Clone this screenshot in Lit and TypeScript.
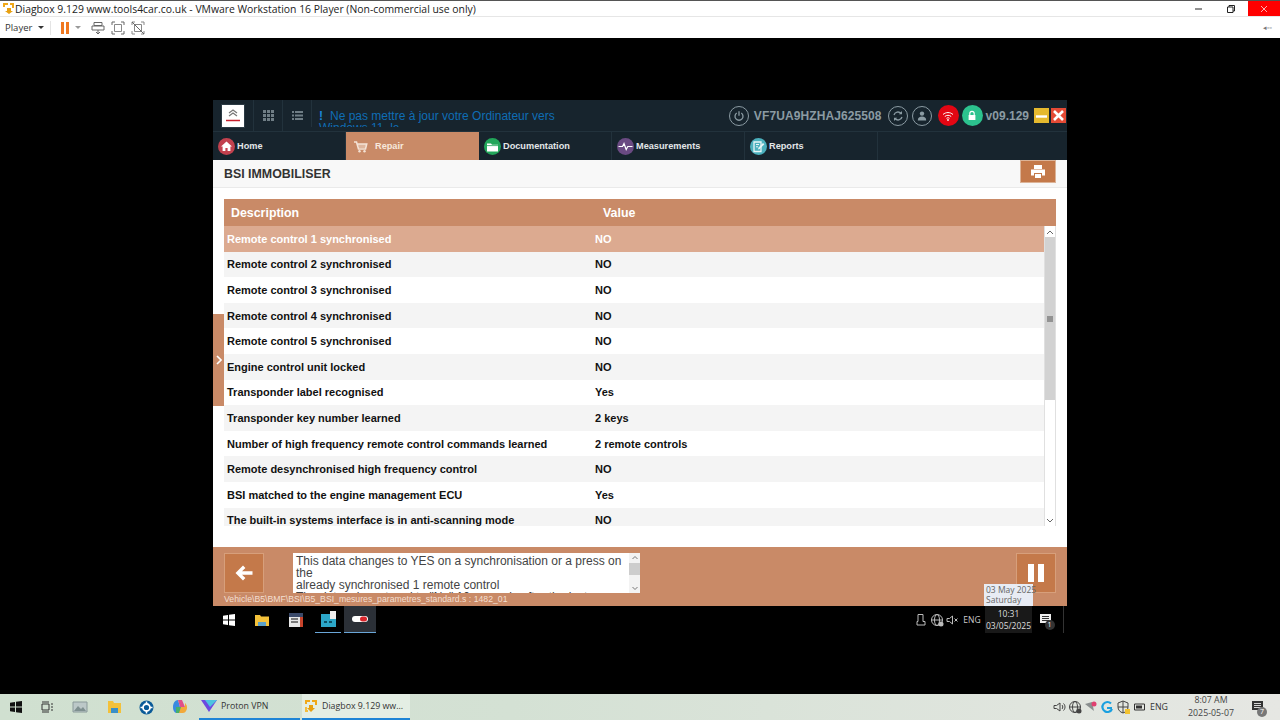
import { LitElement, html, css, svg } from 'lit';
import { customElement } from 'lit/decorators.js';

const ROWS: [string, string][] = [
  ['Remote control 1 synchronised', 'NO'],
  ['Remote control 2 synchronised', 'NO'],
  ['Remote control 3 synchronised', 'NO'],
  ['Remote control 4 synchronised', 'NO'],
  ['Remote control 5 synchronised', 'NO'],
  ['Engine control unit locked', 'NO'],
  ['Transponder label recognised', 'Yes'],
  ['Transponder key number learned', '2 keys'],
  ['Number of high frequency remote control commands learned', '2 remote controls'],
  ['Remote desynchronised high frequency control', 'NO'],
  ['BSI matched to the engine management ECU', 'Yes'],
  ['The built-in systems interface is in anti-scanning mode', 'NO'],
];

// small helper, every icon below is a plain stroked/filled svg
const ico = (w: number, h: number, body: unknown) =>
  html`<svg width=${w} height=${h} viewBox="0 0 ${w} ${h}">${body}</svg>`;

const diagboxLogo = ico(14, 14, svg`
  <path d="M1 1h5v2H3v2H1z M8 1h5v5h-2V3H8z" fill="#f0a818"/>
  <path d="M5 6h4v3h2l-4 4-4-4h2z" fill="#e8a010"/>
  <path d="M1 8h2v3h1v2H1z" fill="#f4bc3c"/>`);

const NAV = [
  { label: 'Home', color: '#c2414e', glyph: svg`<path d="M8.5 3.5 3 8.5h1.6v4.5h2.8v-3h2.2v3h2.8V8.5H14z" fill="#fff"/>` },
  { label: 'Repair', color: 'transparent', glyph: svg`<path d="M2 4h2.5l2 7h7l1.2-5H5.5" fill="none" stroke="#f4e3d6" stroke-width="1.6"/><circle cx="7.5" cy="13.2" r="1.2" fill="#f4e3d6"/><circle cx="12.5" cy="13.2" r="1.2" fill="#f4e3d6"/><path d="M6 7h8M6.5 9h7" stroke="#f4e3d6"/>` },
  { label: 'Documentation', color: '#22a65a', glyph: svg`<path d="M3 5.5h4l1 1.2h6v6.8H3z" fill="#fff"/><path d="M3 7.6h11" stroke="#22a65a" stroke-width=".8"/>` },
  { label: 'Measurements', color: '#6a4a82', glyph: svg`<path d="M1.5 8.5h4l1.5-3 2.2 6 1.6-3h4.7" fill="none" stroke="#fff" stroke-width="1.2"/>` },
  { label: 'Reports', color: '#4bb0bd', glyph: svg`<path d="M4 4h7v9.5H4z" fill="none" stroke="#e8f6f8" stroke-width="1.3"/><path d="M6 6.5h3M6 8.8h2" stroke="#e8f6f8"/><path d="M8 11.5l.4-1.8L13 5l1.3 1.3-4.6 4.8z" fill="#e8f6f8"/>` },
];

@customElement('app-root')
export class AppRoot extends LitElement {
  static styles = css`
    :host {
      display: flex;
      flex-direction: column;
      width: 1280px;
      height: 720px;
      overflow: hidden;
      background: #000;
      font-family: 'Liberation Sans', Arial, sans-serif;
    }
    svg { display: block; flex: none; }

    /* vmware player chrome */
    .vm-title {
      height: 15px;
      border-top: 1px solid #555;
      background: #fff;
      display: flex;
      align-items: center;
      padding-left: 2px;
      gap: 0;
      font: 10.4px 'Open Sans', sans-serif;
      color: #222;
      white-space: nowrap;
    }
    .vm-title .name { margin-left: 0; flex: 1; }
    .win-btn { width: 32px; height: 15px; display: flex; align-items: center; justify-content: center; }
    .win-btn.close { background: #f00; }
    .vm-tools {
      height: 21px;
      background: #fff;
      border-top: 1px solid #e6e6e6;
      display: flex;
      align-items: center;
      font: 9.5px 'Open Sans', sans-serif;
      color: #333;
      padding-left: 5px;
    }
    .vm-tools .caret { width: 0; height: 0; border: 3px solid transparent; border-top: 3px solid #333; border-bottom: 0; margin-left: 6px; }
    .vm-tools .caret.soft { border-top-color: #999; margin: 0 10px 0 6px; }
    .vm-tools .sep { width: 1px; height: 14px; background: #e4e4e4; margin: 0 10px 0 6px; }
    .vm-tools .gap { width: 6px; }
    .vm-tools .end { margin-left: auto; margin-right: 8px; font-size: 7px; color: #777; }

    /* black area around the guest */
    .stage { flex: 1; padding: 62px 0 0 213px; position: relative; }
    .guest { width: 854px; position: relative; }
    .app { height: 506px; display: flex; flex-direction: column; background: #fff; position: relative; }

    .head { height: 31px; background: #17242d; display: flex; align-items: center; color: #8b9ba3; }
    .logo { width: 24px; height: 24px; margin: 0 8px 0 8px; background: #fff; border: 1px solid #2b3a44; box-sizing: border-box; display: flex; align-items: center; justify-content: center; }
    .head-tool { width: 28px; height: 31px; border-left: 1px solid #22323c; display: flex; align-items: center; justify-content: center; }
    .notice {
      width: 286px;
      height: 27px;
      align-self: flex-end;
      margin-bottom: 4px;
      border-left: 1px solid #22323c;
      padding-left: 7px;
      overflow: hidden;
      font-size: 12px;
      line-height: 12px;
      color: #0f6db5;
      padding-top: 10px;
      box-sizing: border-box;
    }
    .notice b { margin-right: 7px; color: #1b86d8; }
    .status { margin-left: auto; display: flex; align-items: center; }
    .circle { width: 20px; height: 20px; border: 1.5px solid #8b9ba3; border-radius: 50%; box-sizing: border-box; display: flex; align-items: center; justify-content: center; }
    .vin { font-size: 12px; font-weight: bold; margin: 0 6px 0 5px; letter-spacing: .1px; }
    .fill { border: 0; width: 21px; height: 21px; }
    .ver { font-size: 12px; font-weight: bold; margin: 0 5px 0 3px; }
    .square { width: 15px; height: 15px; display: flex; align-items: center; justify-content: center; margin-right: 2px; }

    .nav { height: 29px; background: #17242d; border-top: 1px solid #22323c; box-sizing: border-box; display: flex; }
    .tab { width: 133px; display: flex; align-items: center; padding-left: 5px; box-sizing: border-box; gap: 2px; font-size: 9.2px; font-weight: bold; color: #e2e6e8; border-right: 1px solid #22323c; }
    .tab.active { background: #c98a67; color: #f7e8dc; padding-left: 6px; gap: 6px; border: 0; }
    .badge { width: 17px; height: 17px; border-radius: 50%; }

    .title { height: 28px; background: #f8f8f8; border-bottom: 1px solid #eaeaea; box-sizing: border-box; display: flex; align-items: center; justify-content: space-between; padding: 0 11px; font-size: 12.4px; font-weight: bold; color: #333; }
    .print { width: 36px; height: 23px; margin-top: -4px; background: #c4794a; border: 1px solid #dcb397; box-sizing: border-box; display: flex; align-items: center; justify-content: center; }

    .content { flex: 1; padding: 11px 11px 0; min-height: 0; }
    .thead { height: 27px; background: #c98a67; display: flex; align-items: center; font-size: 12.4px; font-weight: bold; color: #fff; }
    .thead span:first-child { width: 372px; padding-left: 7px; box-sizing: border-box; }
    .thead span:last-child { padding-left: 7px; }
    .tbody { height: 300px; display: flex; }
    .rows { flex: 1; overflow: hidden; }
    .row { height: 25.6px; display: flex; align-items: center; font-size: 11px; font-weight: bold; color: #111; background: #fff; }
    .row:nth-child(even) { background: #f4f4f4; }
    .row.sel { background: #dcaa90; color: #fff; }
    .row span:first-child { width: 371px; padding-left: 3px; box-sizing: border-box; }
    .scroll { width: 12px; display: flex; flex-direction: column; border: 1px solid #e0e0e0; border-width: 0 1px; box-sizing: border-box; background: #fff; }
    .arrow { height: 11px; flex: none; display: flex; align-items: center; justify-content: center; }
    .thumb { height: 163px; flex: none; background: #d2d2d2; display: flex; align-items: center; justify-content: center; }
    .track { flex: 1; }

    .drawer { position: absolute; left: 0; top: 214px; width: 11px; height: 92px; background: #c98a67; display: flex; align-items: center; justify-content: center; }

    .foot { height: 59px; background: #c98a67; padding: 6px 11px 0; box-sizing: border-box; position: relative; }
    .foot-main { display: flex; height: 40px; }
    .big-btn { width: 40px; height: 40px; background: #c4794a; border: 1px solid #d79f7b; box-sizing: border-box; display: flex; align-items: center; justify-content: center; }
    .help { width: 347px; margin-left: 29px; height: 40px; background: #fff; display: flex; overflow: hidden; }
    .help-text { flex: 1; padding: 2px 0 0 3px; font-size: 12px; line-height: 12px; color: #444; overflow: hidden; }
    .help-bar { width: 11px; background: #f3f3f3; display: flex; flex-direction: column; justify-content: space-between; align-items: center; }
    .help-thumb { width: 100%; height: 12px; background: #cdcdcd; }
    .foot .big-btn:last-child { margin-left: auto; }
    .path { font-size: 8.7px; color: #f3dfd1; margin-top: 1px; }

    /* guest windows taskbar */
    .gbar { width: 851px; height: 27px; display: flex; align-items: center; background: #000; color: #ccc; font: 8.5px 'Open Sans', sans-serif; }
    .gslot { height: 27px; display: flex; align-items: center; justify-content: center; box-sizing: border-box; }
    .gslot.run { border-bottom: 1px solid #6aa6d8; height: 27px; margin: 0 1px; }
    .gslot.now { background: #2b3037; border-bottom: 1px solid #6aa6d8; }
    .grow { flex: 1; }
    .clock { width: 47px; background: #191919; flex-direction: column; line-height: 12px; color: #ddd; }
    .tip { position: absolute; left: 771px; top: 484px; width: 49px; height: 22px; background: #e8ecf4; color: #666; font: 8.5px/10px 'Open Sans', sans-serif; padding: 1px 0 0 2px; box-sizing: border-box; white-space: nowrap; }

    /* host taskbar */
    .bar { height: 26px; background: linear-gradient(90deg, #d0e0d0, #d4e1d4 40%, #e6e7e3); display: flex; align-items: center; font: 8.8px 'Open Sans', sans-serif; color: #333; }
    .slot { height: 26px; display: flex; align-items: center; justify-content: center; flex: none; }
    .task { height: 26px; display: flex; align-items: center; box-sizing: border-box; border-bottom: 2px solid #1f84d6; white-space: nowrap; gap: 4px; padding-left: 2px; }
    .task.now { background: #e4eee4; }
    .host-clock { width: 64px; flex-direction: column; line-height: 13px; color: #444; }
    .note { position: relative; }
    .count { position: absolute; left: 50%; top: 50%; margin: 0 0 0 -1px; width: 10px; height: 10px; border-radius: 50%; background: #777; color: #fff; font-size: 7px; line-height: 10px; text-align: center; }
  `;

  private tray(stroke: string) {
    return {
      speaker: ico(14, 14, svg`<path d="M2 5.5h2.5L8 3v8L4.5 8.5H2z" fill="none" stroke=${stroke}/><path d="M10 5c1 1 1 3 0 4M11.5 3.5c2 2 2 5 0 7" fill="none" stroke=${stroke}/>`),
      globe: ico(14, 14, svg`<circle cx="7" cy="7" r="5.5" fill="none" stroke=${stroke}/><ellipse cx="7" cy="7" rx="2.5" ry="5.5" fill="none" stroke=${stroke}/><path d="M1.5 7h11" stroke=${stroke}/><circle cx="11" cy="11" r="2.5" fill=${stroke}/>`),
    };
  }

  private note(n: string) {
    return html`<div class="slot note" style="width:30px">
      ${ico(14, 14, svg`<path d="M1 1h11v9H1z" fill="#333"/><path d="M3 3.5h7M3 5.5h7M3 7.5h7" stroke="#fff" stroke-width=".8"/>`)}
      <span class="count">${n}</span>
    </div>`;
  }

  private renderVmChrome() {
    return html`
      <div class="vm-title">
        ${ico(13, 13, svg`<path d="M1 1h5v2H3v2H1z M8 1h4v5h-2V3H8z" fill="#f0a818"/><path d="M5 6h4v3h2l-4 3-4-3h2z" fill="#e8a010"/>`)}
        <span class="name">Diagbox 9.129 www.tools4car.co.uk - VMware Workstation 16 Player (Non-commercial use only)</span>
        <div class="win-btn">${ico(10, 10, svg`<path d="M1 5h7" stroke="#222"/>`)}</div>
        <div class="win-btn" style="margin:0 1px 0 0">${ico(10, 10, svg`<path d="M1.5 3h5.5v5.5H1.5z" fill="none" stroke="#222"/><path d="M3 3V1.5h5.5V7H7" fill="none" stroke="#222"/>`)}</div>
        <div class="win-btn close">${ico(10, 10, svg`<path d="M2 2l6 6M8 2l-6 6" stroke="#ffb0b0"/>`)}</div>
      </div>
      <div class="vm-tools">
        <span>Player</span><span class="caret"></span><span class="sep"></span>
        ${ico(8, 13, svg`<path d="M0 1h3v12H0zM5 1h3v12H5z" fill="#f07820"/>`)}
        <span class="caret soft"></span>
        ${ico(14, 14, svg`<path d="M3 1.5h8v3H3zM1 5h12v4H1z" fill="none" stroke="#666"/><path d="M7 9v3.5M5 11l2 2 2-2" fill="none" stroke="#666"/>`)}
        <span class="gap"></span>
        ${ico(14, 14, svg`<path d="M1 4V1h3M10 1h3v3M13 10v3h-3M4 13H1v-3" fill="none" stroke="#666"/><path d="M3.5 3.5h7v7h-7z" fill="none" stroke="#888"/>`)}
        <span class="gap"></span>
        ${ico(14, 14, svg`<path d="M1 4V1h3M10 1h3v3M13 10v3h-3M4 13H1v-3" fill="none" stroke="#888"/><path d="M3.5 3.5h7v7h-7z" fill="none" stroke="#888"/><path d="M1 1l12 12" stroke="#666"/>`)}
        <span class="end">◂▫▫</span>
      </div>
    `;
  }

  private renderHead() {
    return html`
      <div class="head">
        <div class="logo">
          ${ico(18, 18, svg`<path d="M5 6l4-3 4 3M5 9l4-3 4 3" fill="none" stroke="#777" stroke-width="1.2"/><path d="M2 13.5h14" stroke="#c8202c" stroke-width="1.5"/>`)}
        </div>
        <div class="head-tool">
          ${ico(13, 13, svg`<path d="M1 1h3v3H1zM5 1h3v3H5zM9 1h3v3H9zM1 5h3v3H1zM5 5h3v3H5zM9 5h3v3H9zM1 9h3v3H1zM5 9h3v3H5zM9 9h3v3H9z" fill="#6f7d85"/>`)}
        </div>
        <div class="head-tool">
          ${ico(13, 13, svg`<path d="M1 2h2v2H1zM1 5.5h2v2H1zM1 9h2v2H1zM4 2h8v2H4zM4 5.5h8v2H4zM4 9h8v2H4z" fill="#6f7d85"/>`)}
        </div>
        <div class="notice"><b>!</b>Ne pas mettre à jour votre Ordinateur vers Windows 11, le<br />logiciel DiagBox n'est pas compatible.</div>
        <div class="status">
          <div class="circle">${ico(12, 12, svg`<path d="M3.7 3a4 4 0 1 0 4.6 0" fill="none" stroke="#8b9ba3" stroke-width="1.3"/><path d="M6 1.2v4.5" stroke="#8b9ba3" stroke-width="1.3"/>`)}</div>
          <span class="vin">VF7UA9HZHAJ625508</span>
          <div class="circle">${ico(12, 12, svg`<path d="M2 5a4 4 0 0 1 7-1.5M10 7a4 4 0 0 1-7 1.5" fill="none" stroke="#8b9ba3" stroke-width="1.3"/><path d="M10 1v3.2H6.8M2 11V7.8h3.2" fill="#8b9ba3"/>`)}</div>
          <div class="circle" style="margin-left:4px">${ico(12, 12, svg`<circle cx="6" cy="3.6" r="2.2" fill="#8b9ba3"/><path d="M1.8 10.5c0-3 1.8-4 4.2-4s4.2 1 4.2 4z" fill="#8b9ba3"/>`)}</div>
          <div class="circle fill" style="background:#e30613;margin-left:6px">${ico(12, 12, svg`<path d="M1 4.5c3-2.6 7-2.6 10 0M2.8 6.5c2-1.6 4.4-1.6 6.4 0M4.5 8.3c1-.7 2-.7 3 0" fill="none" stroke="#fff"/><circle cx="6" cy="10" r=".9" fill="#fff"/>`)}</div>
          <div class="circle fill" style="background:#2cc28e;margin-left:3px">${ico(12, 12, svg`<path d="M3.8 5V3.6a2.2 2.2 0 0 1 4.4 0V5" fill="none" stroke="#fff" stroke-width="1.1"/><path d="M2.6 5h6.8v5H2.6z" fill="#fff"/>`)}</div>
          <span class="ver">v09.129</span>
          <div class="square" style="background:#e5b92e">${ico(11, 11, svg`<path d="M0 6.5h11" stroke="#fff" stroke-width="2.4"/>`)}</div>
          <div class="square" style="background:#e44a35;margin-right:1px">${ico(11, 11, svg`<path d="M1 1l9 9M10 1l-9 9" stroke="#fff" stroke-width="2.6"/>`)}</div>
        </div>
      </div>
      <div class="nav">
        ${NAV.map(
          (n) => html`<div class="tab ${n.label === 'Repair' ? 'active' : ''}">
            <svg class="badge" viewBox="0 0 17 17" style="background:${n.color}">${n.glyph}</svg>
            ${n.label}
          </div>`
        )}
      </div>
      <div class="title">
        BSI IMMOBILISER
        <div class="print">
          ${ico(16, 15, svg`<path d="M4 1h8v4H4z" fill="#fff"/><path d="M1 5.5h14v6h-3V9H4v2.5H1z" fill="#fff"/><path d="M5 10h6v4H5z" fill="#fff"/>`)}
        </div>
      </div>
    `;
  }

  private renderTable() {
    return html`
      <div class="content">
        <div class="thead"><span>Description</span><span>Value</span></div>
        <div class="tbody">
          <div class="rows">
            ${ROWS.map(
              ([label, value], i) => html`<div class="row ${i === 0 ? 'sel' : ''}"><span>${label}</span><span>${value}</span></div>`
            )}
          </div>
          <div class="scroll">
            <div class="arrow">${ico(8, 6, svg`<path d="M1 5l3-3 3 3" fill="none" stroke="#666"/>`)}</div>
            <div class="thumb">${ico(6, 6, svg`<path d="M0 1h6M0 3h6M0 5h6" stroke="#555"/>`)}</div>
            <div class="track"></div>
            <div class="arrow">${ico(8, 6, svg`<path d="M1 1l3 3 3-3" fill="none" stroke="#666"/>`)}</div>
          </div>
        </div>
      </div>
      <div class="drawer">${ico(6, 10, svg`<path d="M1 1l4 4-4 4" fill="none" stroke="#fff" stroke-width="1.6"/>`)}</div>
    `;
  }

  private renderFoot() {
    return html`
      <div class="foot">
        <div class="foot-main">
          <div class="big-btn">
            ${ico(20, 18, svg`<path d="M9 1.5 1.5 9 9 16.5l2.4-2.4L8 10.7h10.5V7.3H8l3.4-3.4z" fill="#fff"/>`)}
          </div>
          <div class="help">
            <div class="help-text">
              This data changes to YES on a synchronisation or a press on the<br />
              already synchronised 1 remote control<br />
              The datum is restored to "No" 10 seconds after the last press on the<br />
              remote control which is synchronised and coherent
            </div>
            <div class="help-bar">
              ${ico(8, 10, svg`<path d="M1.5 6l2.5-2.5L6.500 6" fill="none" stroke="#777"/>`)}
              <div class="help-thumb"></div>
              <div style="flex:1"></div>
              ${ico(8, 10, svg`<path d="M1.500 4l2.500 2.500L6.500 4" fill="none" stroke="#777"/>`)}
            </div>
          </div>
          <div class="big-btn">
            ${ico(18, 18, svg`<path d="M1 0h6v18H1zM11 0h6v18h-6z" fill="#fff"/>`)}
          </div>
        </div>
        <div class="path">Vehicle\\B5\\BMF\\BSI\\B5_BSI_mesures_parametres_standard.s : 1482_01</div>
      </div>
    `;
  }

  private renderGuestBar() {
    const t = this.tray('#bbb');
    return html`
      <div class="gbar">
        <div class="gslot" style="width:32px">${ico(12, 12, svg`<path d="M0 1.800 5 1v4.500H0zM6 .8 12 0v5.500H6zM0 6.500h5V11l-5-.7zM6 6.500h6V12l-6-.8z" fill="#fff"/>`)}</div>
        <div class="gslot" style="width:34px">${ico(16, 14, svg`<path d="M1 2h5l1 1.500h8V13H1z" fill="#f3c13a"/><path d="M4 9h8v4H4z" fill="#5aa0c8"/>`)}</div>
        <div class="gslot" style="width:33px">${ico(16, 16, svg`<path d="M1 1h14v14H1z" fill="#e8e8e8"/><path d="M1 1h14v4H1z" fill="#3b4a6a"/><path d="M12 5h3v10h-3z" fill="#c8442c"/><path d="M3 7h7M3 10h7" stroke="#555" stroke-width="1.500"/>`)}</div>
        <div class="gslot run" style="width:26px;margin:0 3px">${ico(15, 16, svg`<path d="M0 3h15v13H0z" fill="#2ca6c8"/><path d="M9 0h6v8H9z" fill="#eee"/><path d="M3 10h3v2H3zM8 10h3v2H8z" fill="#0d4f64"/>`)}</div>
        <div class="gslot now" style="width:32px">${ico(16, 8, svg`<rect x="0" y="1" width="16" height="6" rx="3" fill="#fff"/><rect x="8" y="1.500" width="7" height="5" rx="2.500" fill="#d8262c"/>`)}</div>
        <div class="grow"></div>
        <div class="gslot" style="width:16px">${ico(10, 13, svg`<path d="M2 1.500h5v7h2V12H1V8.500h1z" fill="none" stroke="#bbb"/>`)}</div>
        <div class="gslot" style="width:15px">${t.globe}</div>
        <div class="gslot" style="width:15px">${ico(14, 14, svg`<path d="M2 5.500h2.500L7.500 3v8L4.500 8.500H2z" fill="none" stroke="#bbb"/><path d="M9.500 5.500l3 3M12.500 5.500l-3 3" stroke="#bbb"/>`)}</div>
        <div class="gslot" style="width:26px">ENG</div>
        <div class="gslot clock"><span>10:31</span><span>03/05/2025</span></div>
        <div class="gslot note" style="width:27px">
          ${ico(14, 14, svg`<path d="M1 1h11v9H1z" fill="#eee"/><path d="M3 3.500h7M3 5.500h7M3 7.500h7" stroke="#000" stroke-width=".8"/>`)}
          <span class="count" style="background:#333">1</span>
        </div>
        <div style="width:1px;height:27px;background:#333;margin-left:4px"></div>
      </div>
      <div class="tip">03 May 2025<br />Saturday</div>
    `;
  }

  private renderHostBar() {
    const t = this.tray('#444');
    return html`
      <div class="bar">
        <div class="slot" style="width:32px">${ico(12, 12, svg`<path d="M0 1.800 5 1v4.500H0zM6 .8 12 0v5.500H6zM0 6.500h5V11l-5-.7zM6 6.500h6V12l-6-.8z" fill="#111"/>`)}</div>
        <div class="slot" style="width:30px">${ico(13, 12, svg`<path d="M1 3h7v6H1z" fill="none" stroke="#333"/><path d="M1 1h7M1 11h7M10 3h2M10 6h2M10 9h2" stroke="#333"/>`)}</div>
        <div class="slot" style="width:36px">${ico(16, 14, svg`<path d="M1 2h14v10H1z" fill="#bcc8c8" stroke="#8a9a9a"/><path d="M2 11l4-5 3 3 2-2 3 4z" fill="#7f9090"/>`)}</div>
        <div class="slot" style="width:32px">${ico(15, 14, svg`<path d="M1 1h5l1 2h7v10H1z" fill="#f3c13a"/><path d="M4 8h7v5H4z" fill="#3a8fc8"/>`)}</div>
        <div class="slot" style="width:33px">${ico(15, 15, svg`<circle cx="7.500" cy="7.500" r="7" fill="#0a5a98"/><circle cx="7.500" cy="7.500" r="3.500" fill="none" stroke="#fff" stroke-width="1.800"/><path d="M7.500 1.500v3M7.500 10.500v3M1.500 7.500h3M10.500 7.500h3" stroke="#fff" stroke-width="1.500"/>`)}</div>
        <div class="slot" style="width:33px">${ico(16, 16, svg`<path d="M6 1c-3 0-5 3-5 7s2 6 4 6l3-6z" fill="#3a8ae0"/><path d="M6 1h4l3 7-5 0z" fill="#e0508a"/><path d="M13 4c2 2 3 5 1 8-1 2-3 2-4 2H5l3-6 5 0z" fill="#f2a93a"/><path d="M4 8h5l-2 6H4z" fill="#46b06c"/>`)}</div>
        <div class="task" style="width:101px;margin-left:3px">
          ${ico(16, 14, svg`<path d="M0 1h16L8 13z" fill="#6d4ae0"/><path d="M4 1h12L9 8z" fill="#4cc4e0"/>`)}
          <span>Proton VPN</span>
        </div>
        <div class="task now" style="width:108px;margin-left:2px">
          ${diagboxLogo}
          <span>Diagbox 9.129 ww...</span>
        </div>
        <div class="slot" style="flex:1"></div>
        <div class="slot" style="width:17px">${t.speaker}</div>
        <div class="slot" style="width:16px">${t.globe}</div>
        <div class="slot" style="width:16px">${ico(14, 12, svg`<path d="M1 3l7-2 2 9z" fill="#8a8f8f"/><circle cx="10" cy="3" r="2.500" fill="#e04070"/>`)}</div>
        <div class="slot" style="width:16px">${ico(14, 14, svg`<path d="M11 3.500A5 5 0 1 0 12 9" fill="none" stroke="#1aa0e0" stroke-width="2.200"/><path d="M7 8h5" stroke="#1aa0e0" stroke-width="2"/>`)}</div>
        <div class="slot" style="width:16px">${ico(14, 14, svg`<path d="M7 1l5 2v4c0 3-2 5-5 6-3-1-5-3-5-6V3z" fill="none" stroke="#444"/><path d="M7 1v12M2 7h10" stroke="#444"/><path d="M9 9h5v5H9z" fill="#f2c230"/>`)}</div>
        <div class="slot" style="width:18px">${ico(12, 8, svg`<path d="M.5 1h10v6H.5z" fill="none" stroke="#333"/><path d="M2 2.500h6v3H2z" fill="#333"/>`)}</div>
        <div class="slot" style="width:20px">ENG</div>
        <div class="slot host-clock" style="margin-left:10px"><span>8:07 AM</span><span>2025-05-07</span></div>
        ${this.note('7')}
        <div style="width:7px"></div>
      </div>
    `;
  }

  render() {
    return html`
      ${this.renderVmChrome()}
      <div class="stage">
        <div class="guest">
          <div class="app">
            ${this.renderHead()}
            ${this.renderTable()}
            ${this.renderFoot()}
          </div>
          ${this.renderGuestBar()}
        </div>
      </div>
      ${this.renderHostBar()}
    `;
  }
}
